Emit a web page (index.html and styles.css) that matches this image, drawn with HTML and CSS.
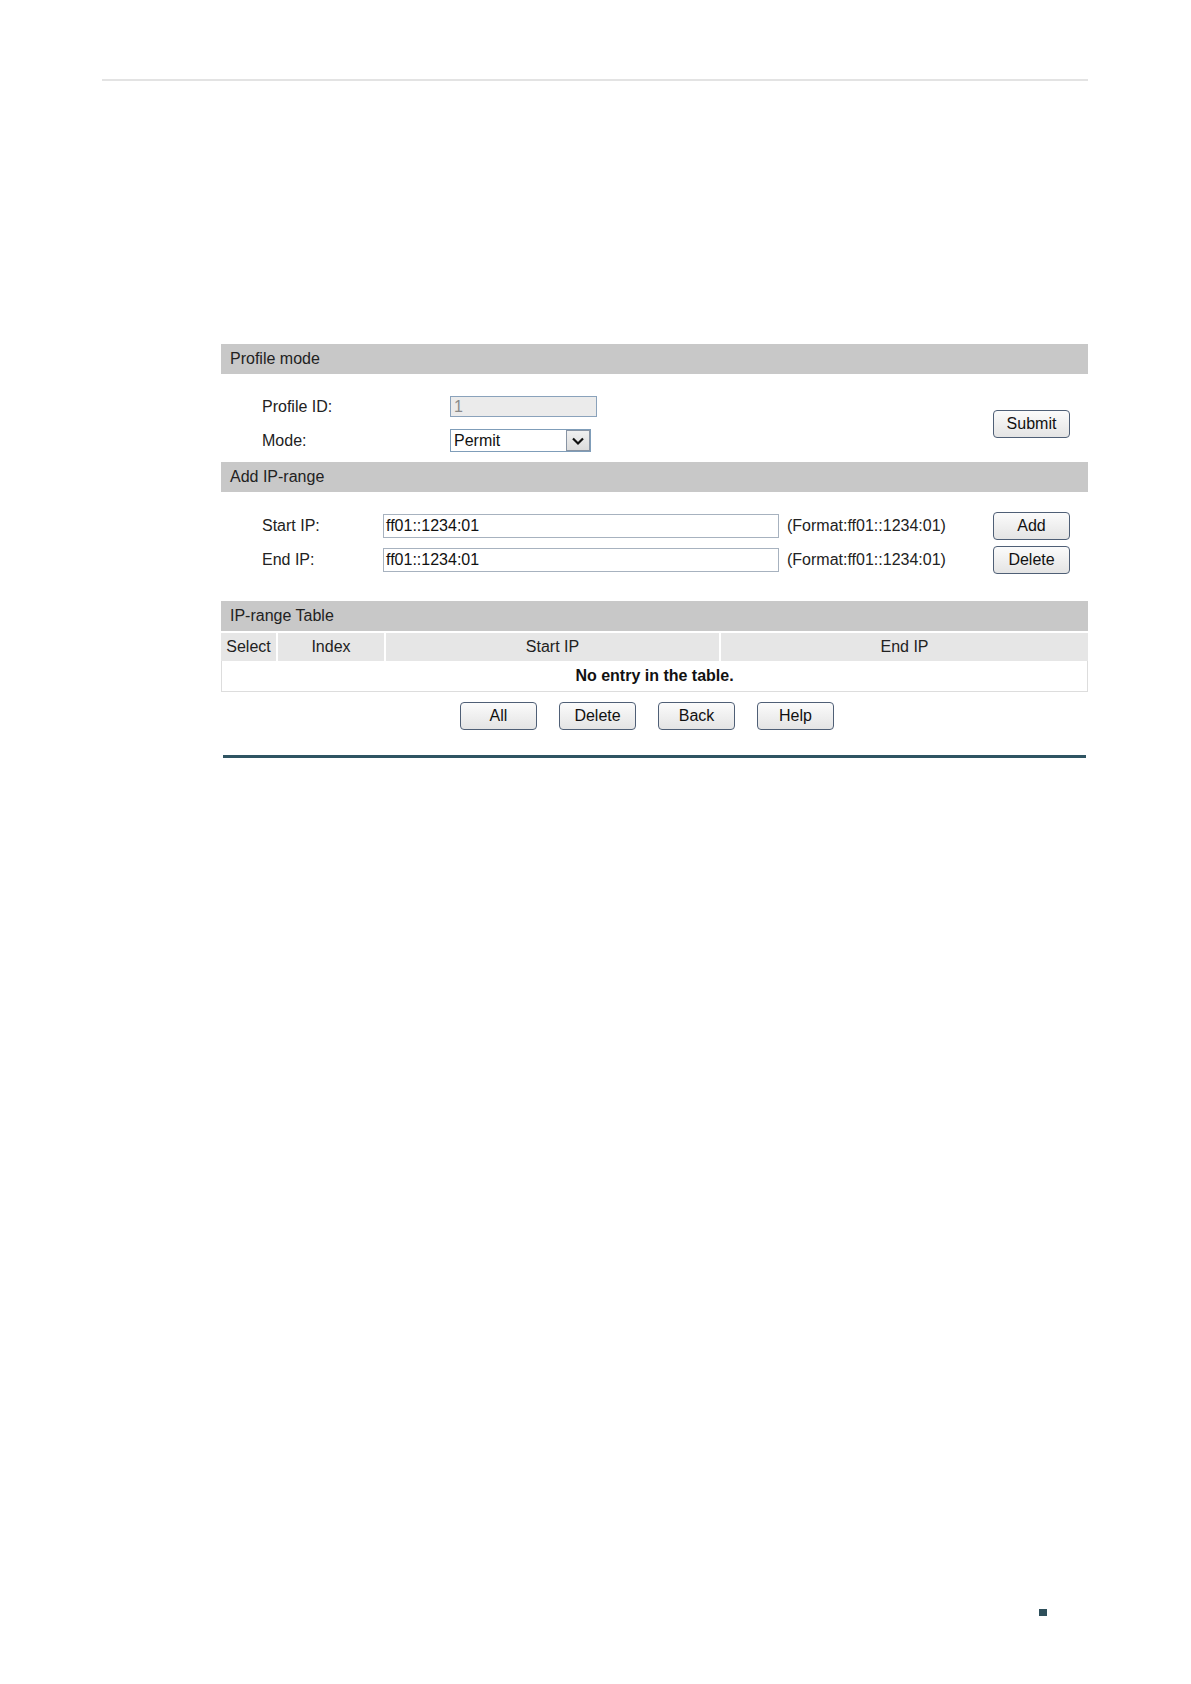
FILE: index.html
```html
<!DOCTYPE html>
<html lang="en">
<head>
<meta charset="utf-8">
<title>IP-range Profile</title>
<link rel="stylesheet" href="styles.css">
</head>
<body>
<div class="page">
  <div class="top-rule"></div>

  <div class="panel">
    <div class="bar">Profile mode</div>
    <div class="profile-body">
      <div class="form-grid">
        <div class="label">Profile ID:</div>
        <div class="input disabled">1</div>
        <div class="label">Mode:</div>
        <div class="select">
          <span class="select-text">Permit</span>
          <span class="select-arrow">
            <svg width="14" height="10" viewBox="0 0 14 10"><path d="M2 2.5 L7 7.5 L12 2.5" fill="none" stroke="#111" stroke-width="2.2"/></svg>
          </span>
        </div>
      </div>
      <button class="btn">Submit</button>
    </div>

    <div class="bar">Add IP-range</div>
    <div class="ip-body">
      <div class="label">Start IP:</div>
      <div class="input ip">ff01::1234:01</div>
      <div class="hint">(Format:ff01::1234:01)</div>
      <button class="btn">Add</button>
      <div class="label">End IP:</div>
      <div class="input ip">ff01::1234:01</div>
      <div class="hint">(Format:ff01::1234:01)</div>
      <button class="btn">Delete</button>
    </div>

    <div class="bar">IP-range Table</div>
    <div class="table">
      <div class="th">Select</div>
      <div class="th sep">Index</div>
      <div class="th sep">Start IP</div>
      <div class="th sep">End IP</div>
      <div class="empty">No entry in the table.</div>
    </div>
    <div class="actions">
      <button class="btn">All</button>
      <button class="btn">Delete</button>
      <button class="btn">Back</button>
      <button class="btn">Help</button>
    </div>
    <div class="bottom-rule"></div>
  </div>

  <div class="page-mark"></div>
</div>
</body>
</html>
```

FILE: styles.css
```css
html, body {
  margin: 0;
  padding: 0;
  background: #ffffff;
}

body {
  font-family: "Liberation Sans", Arial, sans-serif;
  font-size: 16px;
  color: #222222;
}

.page {
  width: 1191px;
  height: 1684px;
  overflow: hidden;
}

.top-rule {
  margin: 79px 0 0 102px;
  width: 986px;
  height: 2px;
  background: #e3e3e3;
}

.panel {
  margin: 263px 0 0 221px;
  width: 867px;
}

.bar {
  height: 30px;
  line-height: 30px;
  padding-left: 9px;
  background: #c8c8c8;
  color: #222222;
}

.profile-body {
  display: flex;
  align-items: center;
  justify-content: space-between;
  padding: 22px 18px 10px 41px;
}

.form-grid {
  display: grid;
  grid-template-columns: 188px auto;
  row-gap: 12px;
  align-items: center;
}

.label {
  color: #222222;
}

.input {
  box-sizing: border-box;
  border: 1px solid #8fa3b8;
  background: #ffffff;
  color: #111111;
  padding-left: 3px;
  display: flex;
  align-items: center;
}

.input.disabled {
  width: 147px;
  height: 21px;
  background: #ebebeb;
  color: #8a8a8a;
  border-color: #8aa2bb;
}

.select {
  box-sizing: border-box;
  width: 141px;
  height: 23px;
  border: 1px solid #7f9db9;
  background: #ffffff;
  display: flex;
  align-items: stretch;
  justify-content: space-between;
}

.select-text {
  padding-left: 3px;
  display: flex;
  align-items: center;
  color: #111111;
}

.select-arrow {
  box-sizing: border-box;
  width: 24px;
  border: 1px solid #8894a4;
  background: linear-gradient(#f0f0f0, #dcdcdc);
  display: flex;
  align-items: center;
  justify-content: center;
}

.ip-body {
  display: grid;
  grid-template-columns: 121px 396px 1fr 77px;
  grid-auto-rows: 28px;
  row-gap: 6px;
  align-items: center;
  padding: 20px 18px 27px 41px;
}

.input.ip {
  height: 24px;
  padding-left: 2px;
  border-color: #a7b2bf;
}

.hint {
  margin-left: 8px;
  color: #222222;
}

.btn {
  box-sizing: border-box;
  width: 77px;
  height: 28px;
  padding: 0;
  border: 1px solid #4f5f76;
  border-radius: 4px;
  background: linear-gradient(#fbfbfb, #e4e4e4);
  font-family: "Liberation Sans", Arial, sans-serif;
  font-size: 16px;
  color: #111111;
}

.table {
  display: grid;
  grid-template-columns: 55px 108px 335px 369px;
  margin-top: 2px;
}

.th {
  box-sizing: border-box;
  height: 28px;
  line-height: 28px;
  text-align: center;
  background: #e6e6e6;
  color: #222222;
}

.th.sep {
  border-left: 2px solid #ffffff;
}

.empty {
  grid-column: 1 / -1;
  box-sizing: border-box;
  height: 31px;
  line-height: 29px;
  text-align: center;
  font-weight: bold;
  color: #111111;
  border: 1px solid #dddddd;
  border-top: none;
}

.actions {
  display: flex;
  gap: 22px;
  margin-top: 10px;
  padding-left: 239px;
}

.bottom-rule {
  margin: 25px 0 0 2px;
  width: 863px;
  height: 3px;
  background: #2f5462;
}

.page-mark {
  margin: 851px 0 0 1039px;
  width: 8px;
  height: 7px;
  background: #2e4f5b;
}
```
